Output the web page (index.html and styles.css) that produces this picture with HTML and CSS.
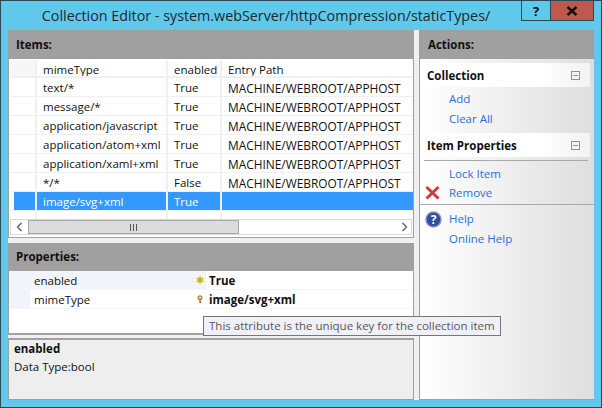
FILE: index.html
```html
<!DOCTYPE html>
<html lang="en">
<head>
<meta charset="utf-8">
<title>Collection Editor</title>
<link rel="stylesheet" href="styles.css">
</head>
<body>
<div class="window">
  <div class="titlebar">
    <div class="title">Collection Editor - system.webServer/httpCompression/staticTypes/</div>
    <div class="winbtns">
      <div class="winbtn help">?</div>
      <div class="winbtn close">
        <svg width="12" height="10" viewBox="0 0 12 10"><path d="M1.5 1 L10.5 9 M10.5 1 L1.5 9" stroke="#111" stroke-width="2.4"/></svg>
      </div>
    </div>
  </div>
  <div class="client">
    <div class="left">
      <div class="section items">
        <div class="panelhead tall">Items:</div>
        <div class="grid">
          <div class="row headrow"><div class="rh"></div><div class="c1">mimeType</div><div class="c2">enabled</div><div class="c3">Entry Path</div></div>
          <div class="row"><div class="rh"></div><div class="c1">text/*</div><div class="c2">True</div><div class="c3">MACHINE/WEBROOT/APPHOST</div></div>
          <div class="row"><div class="rh"></div><div class="c1">message/*</div><div class="c2">True</div><div class="c3">MACHINE/WEBROOT/APPHOST</div></div>
          <div class="row"><div class="rh"></div><div class="c1">application/javascript</div><div class="c2">True</div><div class="c3">MACHINE/WEBROOT/APPHOST</div></div>
          <div class="row"><div class="rh"></div><div class="c1">application/atom+xml</div><div class="c2">True</div><div class="c3">MACHINE/WEBROOT/APPHOST</div></div>
          <div class="row"><div class="rh"></div><div class="c1">application/xaml+xml</div><div class="c2">True</div><div class="c3">MACHINE/WEBROOT/APPHOST</div></div>
          <div class="row"><div class="rh"></div><div class="c1">*/*</div><div class="c2">False</div><div class="c3">MACHINE/WEBROOT/APPHOST</div></div>
          <div class="row selected"><div class="rh"></div><div class="c1">image/svg+xml</div><div class="c2">True</div><div class="c3"></div></div>
          <div class="row blank"><div class="rh"></div><div class="c1"></div><div class="c2"></div><div class="c3"></div></div>
        </div>
        <div class="hscroll">
          <div class="arrow"><svg width="7" height="10" viewBox="0 0 7 10"><path d="M5.5 1 L1.5 5 L5.5 9" fill="none" stroke="#606060" stroke-width="1.4"/></svg></div>
          <div class="thumb"><span></span><span></span><span></span></div>
          <div class="track"></div>
          <div class="arrow right"><svg width="7" height="10" viewBox="0 0 7 10"><path d="M1.5 1 L5.5 5 L1.5 9" fill="none" stroke="#606060" stroke-width="1.4"/></svg></div>
        </div>
      </div>
      <div class="section props">
        <div class="panelhead">Properties:</div>
        <div class="proprow active">
          <div class="pname">enabled</div>
          <div class="picon"><svg width="8" height="8" viewBox="0 0 9 9"><path d="M4.5 .5 V8.5 M1 2.5 L8 6.5 M8 2.5 L1 6.5" stroke="#b9b900" stroke-width="1.8"/></svg></div>
          <div class="pval">True</div>
        </div>
        <div class="proprow">
          <div class="pname">mimeType</div>
          <div class="picon"><svg width="6" height="9" viewBox="0 0 7 10"><circle cx="3.5" cy="3" r="2.2" fill="#e8d49a" stroke="#a8863a" stroke-width="1.5"/><path d="M3.5 5 V9.5 M3.5 8 H5" stroke="#8a6a28" stroke-width="1.4"/></svg></div>
          <div class="pval">image/svg+xml</div>
        </div>
      </div>
      <div class="desc">
        <div class="dname">enabled</div>
        <div class="dtype">Data Type:bool</div>
      </div>
    </div>
    <div class="actions">
      <div class="panelhead tall acthead">Actions:</div>
      <div class="group">
        <div class="grouphead"><span>Collection</span><div class="collapse"></div></div>
        <a class="link first">Add</a>
        <a class="link">Clear All</a>
      </div>
      <div class="group">
        <div class="grouphead"><span>Item Properties</span><div class="collapse"></div></div>
        <div class="rule short"></div>
        <a class="link">Lock Item</a>
        <a class="link iconlink tight">
          <svg class="aicon" width="15" height="15" viewBox="0 0 15 15"><path d="M1.5 2 L13.5 13.5 M13.5 2 L1.5 13.5" stroke="#d3383a" stroke-width="3"/></svg>Remove</a>
        <div class="rule"></div>
        <a class="link iconlink helpl">
          <svg class="aicon" width="17" height="17" viewBox="0 0 17 17"><circle cx="8.5" cy="8.5" r="7.5" fill="#2a4fa8" stroke="#8a94a8" stroke-width="1.5"/><text x="8.5" y="12.5" text-anchor="middle" class="qmark">?</text></svg>Help</a>
        <a class="link">Online Help</a>
      </div>
    </div>
    <div class="tooltip">This attribute is the unique key for the collection item</div>
  </div>
</div>
</body>
</html>
```
FILE: styles.css
```css
* { box-sizing: border-box; }
html, body { margin: 0; padding: 0; }
body { width: 602px; height: 408px; overflow: hidden; font-family: "Open Sans", "Noto Sans", sans-serif; font-size: 11.5px; color: #111; }
.window { width: 602px; height: 408px; background: #60c8ea; border: 1px solid #2a4a58; display: flex; flex-direction: column; }
.titlebar { height: 29px; flex: none; display: flex; position: relative; }
.title { flex: 1; text-align: center; font-size: 14.3px; line-height: 30px; color: #1a2a33; padding-right: 70px; white-space: nowrap; }
.winbtns { position: absolute; right: 7px; top: 0; display: flex; }
.winbtn { height: 20px; display: flex; align-items: center; justify-content: center; border: 1px solid #2a4a58; border-top: 0; }
.help { width: 29px; font-weight: 700; font-size: 13px; border-right: 0; }
.close { width: 44px; background: #c0584f; }
.client { position: relative; margin: 0 7px 7px 7px; flex: 1; display: flex; background: #f0f0f0; }
.left { width: 406px; flex: none; display: flex; flex-direction: column; }
.panelhead { height: 28px; background: #a0a0a0; font-weight: 700; font-size: 11.5px; padding-left: 7px; line-height: 28px; color: #111; }
.panelhead.tall { height: 29px; line-height: 30px; }
.panelhead.acthead { padding-left: 8px; }
.section { background: #fff; border: 1px solid #a0a0a0; border-top: 0; }
.items { height: 208px; }
.grid { padding: 1px 0 0 1px; }
.row { display: flex; height: 19px; line-height: 20px; border-bottom: 1px solid #f0f0f0; }
.row > div { border-right: 2px solid #f0f0f0; padding-left: 6px; overflow: hidden; white-space: nowrap; }
.rh { width: 27px; flex: none; }
.c1 { width: 131px; flex: none; }
.c2 { width: 54px; flex: none; }
.c3 { flex: 1; border-right: 0 !important; font-size: 11.9px; }
.headrow { height: 18px; }
.headrow > div { background: #fff; border-bottom: 1px solid #f0f0f0; font-size: 11.5px; }
.headrow .rh { background: #f7f7f7; }
.selected { background: #3399ff; color: #fff; }
.selected .rh { background: linear-gradient(90deg, #fff 4px, #3399ff 4px); }
.blank { height: 8px; border-bottom: 0; }
.hscroll { display: flex; height: 16px; margin: 0 1px; border: 1px solid #d8d8d8; }
.arrow { width: 17px; flex: none; display: flex; align-items: center; justify-content: center; background: #fff; }
.arrow.right { width: 13px; }
.thumb { width: 211px; flex: none; background: #dcdcdc; border: 1px solid #a8a8a8; display: flex; align-items: center; justify-content: center; gap: 1px; }
.thumb span { width: 1px; height: 7px; background: #555; margin-right: 1px; }
.track { flex: 1; background: #fff; }
.props { margin-top: 5px; height: 92px; border-bottom-width: 2px; }
.proprow { display: flex; height: 19px; line-height: 19px; background: #fff; border-bottom: 1px solid #f4f6fb; }
.pname { width: 184px; flex: none; padding-left: 25px; background: linear-gradient(90deg, #f1f5fb 21px, #fff 21px); }
.active .pname { background: #f1f5fb; }
.picon { width: 13px; flex: none; display: flex; align-items: center; justify-content: center; }
.active .picon { background: #f1f5fb; }
.pval { flex: 1; font-weight: 700; padding-left: 3px; }
.desc { flex: 1; margin-top: 3px; background: #eeeeee; border: 1px solid #a0a0a0; border-top-width: 2px; padding: 0 5px; line-height: 18px; }
.dname { font-weight: 700; }
.actions { flex: 1; margin-left: 5px; background: linear-gradient(90deg, #fff, #dedede); border-left: 1px solid #a0a0a0; border-bottom: 1px solid #a0a0a0; display: flex; flex-direction: column; }
.group { display: flex; flex-direction: column; }
.grouphead { height: 24px; margin: 4px 4px 0 0; padding: 0 10px 0 7px; display: flex; align-items: center; justify-content: space-between; font-weight: 700; background: linear-gradient(90deg, #fff 70%, #f2f2f2); }
.collapse { width: 9px; height: 9px; border: 1px solid #8e8e9e; background: linear-gradient(#8e8e9e, #8e8e9e) center / 5px 1px no-repeat, #f4f4f4; }
.link { color: #2a6fd6; height: 20px; line-height: 20px; padding-left: 29px; position: relative; display: block; }
.first { margin-top: 2px; }
.tight { height: 19px; margin-top: -1px; }
.rule { height: 1px; background: #a9a9a9; margin: 2px 0 3px 0; }
.short { margin: 3px 6px 3px 4px; }
.aicon { position: absolute; left: 5px; top: 2px; }
.helpl { margin-top: 1px; }
.qmark { font-size: 12px; font-weight: 700; fill: #fff; }
.tooltip { position: absolute; left: 195px; top: 286px; height: 20px; line-height: 17px; padding: 0 5px; background: #f0f0f8; border: 1px solid #767676; color: #575757; font-size: 11.5px; white-space: nowrap; }
```
